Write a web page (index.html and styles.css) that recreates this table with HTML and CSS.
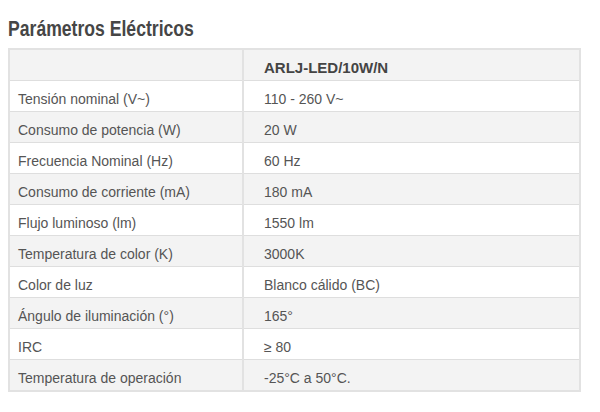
FILE: index.html
```html
<!DOCTYPE html>
<html lang="es">
<head>
<meta charset="utf-8">
<title>Parámetros Eléctricos</title>
<link rel="stylesheet" href="styles.css">
</head>
<body>
<div class="page">
  <h2 class="title"><span class="title-text">Parámetros Eléctricos</span></h2>
  <table class="specs">
    <thead>
      <tr><th class="label"></th><th class="value">ARLJ-LED/10W/N</th></tr>
    </thead>
    <tbody>
      <tr><td class="label">Tensión nominal (V~)</td><td class="value">110 - 260 V~</td></tr>
      <tr><td class="label">Consumo de potencia (W)</td><td class="value">20 W</td></tr>
      <tr><td class="label">Frecuencia Nominal (Hz)</td><td class="value">60 Hz</td></tr>
      <tr><td class="label">Consumo de corriente (mA)</td><td class="value">180 mA</td></tr>
      <tr><td class="label">Flujo luminoso (lm)</td><td class="value">1550 lm</td></tr>
      <tr><td class="label">Temperatura de color (K)</td><td class="value">3000K</td></tr>
      <tr><td class="label">Color de luz</td><td class="value">Blanco cálido (BC)</td></tr>
      <tr><td class="label">Ángulo de iluminación (°)</td><td class="value">165°</td></tr>
      <tr><td class="label">IRC</td><td class="value">≥ 80</td></tr>
      <tr><td class="label">Temperatura de operación</td><td class="value">-25°C a 50°C.</td></tr>
    </tbody>
  </table>
</div>
</body>
</html>
```

FILE: styles.css
```css
html, body {
  margin: 0;
  padding: 0;
  background: #ffffff;
}

.page {
  padding: 16px 8px 0;
  font-family: "Liberation Sans", Arial, sans-serif;
  color: #555555;
}

.title {
  margin: 0 0 7px;
  font-family: "Liberation Sans", Arial, sans-serif;
  font-weight: 700;
  font-size: 22px;
  line-height: 25px;
  color: #464646;
}

.title-text {
  display: inline-block;
  transform: scaleX(0.8);
  transform-origin: left center;
}

.specs {
  width: 573px;
  border-collapse: collapse;
  border: 2px solid #e2e2e2;
  font-size: 14px;
  line-height: 16px;
}

.specs th,
.specs td {
  height: 16px;
  padding: 10px 8px 4px;
  border-top: 1px solid #dedede;
  border-bottom: 1px solid #dedede;
  text-align: left;
  vertical-align: middle;
  white-space: nowrap;
}

.specs .label {
  width: 216px;
  border-right: 2px solid #e2e2e2;
}

.specs .value {
  padding-left: 20px;
}

.specs th {
  font-weight: 700;
  font-size: 15px;
  color: #444444;
  background: #f3f3f3;
}

.specs tbody tr:nth-child(even) td {
  background: #f3f3f3;
}
```
